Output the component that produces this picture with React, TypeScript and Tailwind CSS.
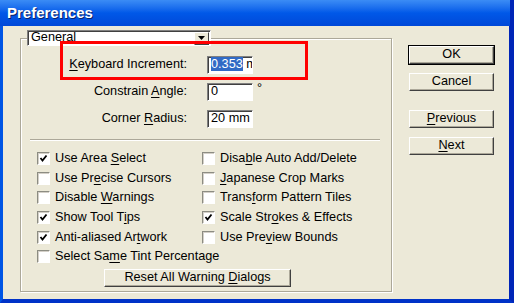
import React from "react";

const font = { fontFamily: '"Liberation Sans", Arial, sans-serif' };

function U({ children }: { children: React.ReactNode }) {
  return <span className="underline underline-offset-[2px]">{children}</span>;
}

function CheckBox({ checked }: { checked?: boolean }) {
  return (
    <span className="flex h-[13px] w-[13px] shrink-0 items-center justify-center border-t border-l border-t-[#8c8c82] border-l-[#8c8c82] border-b border-r border-b-white border-r-white bg-white shadow-[inset_1px_1px_0_#d4d0c8]">
      {checked && (
        <svg width="9" height="9" viewBox="0 0 9 9">
          <path d="M1.5 4 L3.5 6.5 L7.5 1.5" fill="none" stroke="#000" strokeWidth="1.8" />
        </svg>
      )}
    </span>
  );
}

function Check({ label, checked }: { label: React.ReactNode; checked?: boolean }) {
  return (
    <div className="flex h-[19.6px] items-center gap-[5px]">
      <CheckBox checked={checked} />
      <span className="whitespace-nowrap">{label}</span>
    </div>
  );
}

function Button({ children, primary, className = "" }: { children: React.ReactNode; primary?: boolean; className?: string }) {
  return (
    <div
      className={`flex items-center justify-center ${
        primary ? "border border-black" : "border border-transparent"
      } ${className}`}
    >
      <div className="flex h-full w-full items-center justify-center border-t border-l border-t-white border-l-white border-b border-r border-b-[#404040] border-r-[#404040] bg-[#ECE9D8] shadow-[inset_-1px_-1px_0_#aca899]">
        {children}
      </div>
    </div>
  );
}

function Field({ label, value, selected, suffix }: { label: React.ReactNode; value: string; selected?: boolean; suffix?: string }) {
  return (
    <div className="flex h-[18px] items-center">
      <span className="w-[166px] whitespace-nowrap text-right">{label}</span>
      <div className="ml-[20px] flex h-[18px] w-[46px] items-center overflow-hidden border-t border-l border-t-[#808080] border-l-[#808080] border-b border-r border-b-white border-r-white bg-white shadow-[inset_1px_1px_0_#404040] pl-[3px]">
        {selected ? (
          <span className="whitespace-nowrap">
            <span className="bg-[#316AC5] text-white">{value}</span> m
          </span>
        ) : (
          <span className="whitespace-nowrap">{value}</span>
        )}
      </div>
      {suffix && <span className="ml-[4px] self-start leading-[10px]">{suffix}</span>}
    </div>
  );
}

export default function App() {
  return (
    <div className="relative flex h-[303px] w-[514px] flex-col bg-[#0A3FD0] text-[12.7px] text-black" style={font}>
      <div className="flex h-[26px] items-center bg-gradient-to-b from-[#3B8CF5] via-[#0058E8] to-[#0048D8] pl-[7px] border-r-[4px] border-r-[#0025B8]">
        <span className="text-[15px] font-bold text-white [text-shadow:1px_1px_0_#0a246a]">Preferences</span>
      </div>
      <div className="flex flex-1 border-l-[3px] border-l-[#0055E5] border-r-[5px] border-r-[#0025B8] border-b-[4px] border-b-[#0032C8] bg-[#ECE9D8]">
        <fieldset className="ml-[17px] mt-[4px] h-[262px] w-[372px] border border-[#ACA899] shadow-[inset_1px_1px_0_#fff,1px_1px_0_#fff]">
          <legend className="ml-[6px] flex h-[16px] w-[184px] items-center border-t border-l border-t-[#808080] border-l-[#808080] border-b border-r border-b-white border-r-white bg-white shadow-[inset_1px_1px_0_#404040]">
            <span className="flex-1 pl-[3px]">General</span>
            <span className="mr-[1px] flex h-[13px] w-[15px] items-center justify-center border-t border-l border-t-white border-l-white border-b border-r border-b-[#404040] border-r-[#404040] bg-[#ECE9D8]">
              <svg width="7" height="4" viewBox="0 0 7 4">
                <path d="M0 0 H7 L3.5 4 Z" fill="#000" />
              </svg>
            </span>
          </legend>
          <div className="mt-[10px] flex flex-col gap-[9px]">
            <Field label={<><U>K</U>eyboard Increment:</>} value="0.353" selected />
            <Field label={<>Constrain <U>A</U>ngle:</>} value="0" suffix="°" />
            <Field label={<>Corner <U>R</U>adius:</>} value="20 mm" />
          </div>
          <div className="ml-[9px] mt-[11px] h-[2px] w-[350px] border-t border-t-[#ACA899] border-b border-b-white" />
          <div className="ml-[16px] mt-[8px] grid grid-cols-[165px_auto]">
            <div className="flex flex-col">
              <Check checked label={<>Use Area <U>S</U>elect</>} />
              <Check label={<>Use Pr<U>e</U>cise Cursors</>} />
              <Check label={<>Disable <U>W</U>arnings</>} />
              <Check checked label={<>Show Tool T<U>i</U>ps</>} />
              <Check checked label={<>Anti-aliased Ar<U>t</U>work</>} />
              <Check label={<>Select Sa<U>m</U>e Tint Percentage</>} />
            </div>
            <div className="flex flex-col">
              <Check label={<>Disa<U>b</U>le Auto Add/Delete</>} />
              <Check label={<><U>J</U>apanese Crop Marks</>} />
              <Check label={<>Trans<U>f</U>orm Pattern Tiles</>} />
              <Check checked label={<>Scale Str<U>o</U>kes &amp; Effects</>} />
              <Check label={<>Use Pre<U>v</U>iew Bounds</>} />
            </div>
          </div>
          <Button className="ml-[82px] mt-[1px] h-[20px] w-[189px]">
            <span className="whitespace-nowrap">Reset All Warning <U>D</U>ialogs</span>
          </Button>
        </fieldset>
        <div className="ml-[16px] mt-[19px] flex w-[87px] flex-col">
          <Button primary className="h-[20px]">OK</Button>
          <Button className="mt-[7px] h-[20px]">Cancel</Button>
          <Button className="mt-[17px] h-[20px]">
            <U>P</U>revious
          </Button>
          <Button className="mt-[7px] h-[20px]">
            <U>N</U>ext
          </Button>
        </div>
      </div>
      <div className="pointer-events-none absolute left-[60px] top-[41px] h-[39px] w-[248px] border-[3px] border-[#FF0000]" />
    </div>
  );
}
